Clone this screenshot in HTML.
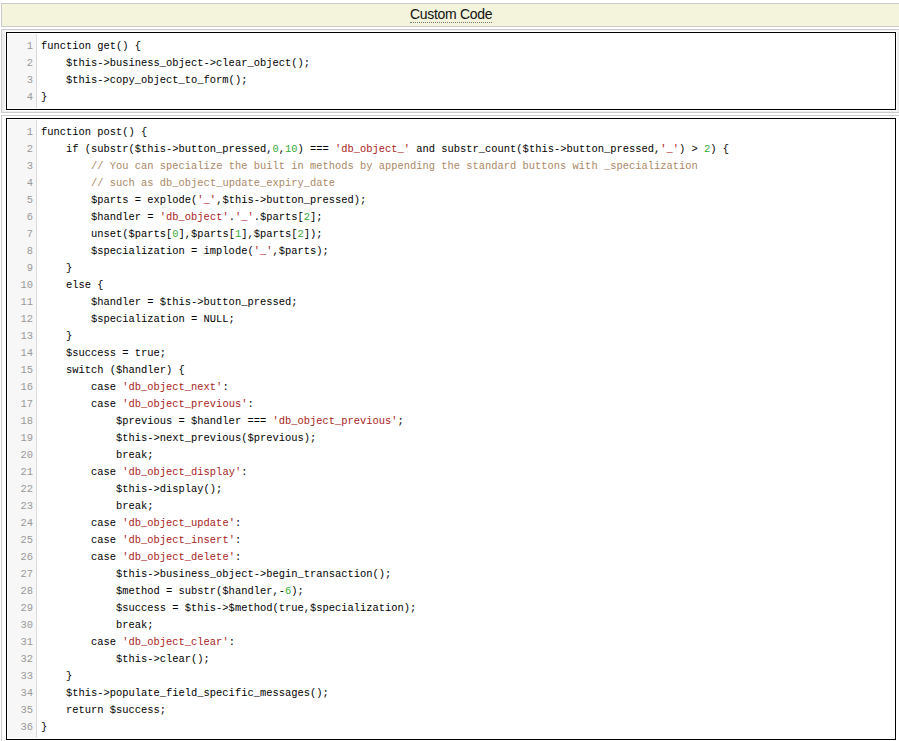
<!DOCTYPE html>
<html><head><meta charset="utf-8">
<style>
html,body{margin:0;padding:0;background:#fff;width:899px;height:741px;overflow:hidden;position:relative}
.hdr{position:absolute;left:1px;top:3px;width:920px;height:22px;border:1px solid #cbcbcb;background:#f4f4dc}
.ttl{position:absolute;left:410px;top:7px;font-family:"Liberation Sans",sans-serif;font-size:14px;letter-spacing:-0.3px;line-height:15px;color:#111;white-space:nowrap;border-bottom:1px dotted #777;padding-bottom:0}
.box{position:absolute;left:1px;width:920px;border:1px solid #cbcbcb;background:#fff}
.box1{top:29px;height:82px;background:#efefef}
.box2{top:115px;height:640px}
.ed{position:absolute;left:6px;width:888px;border:1px solid #000;background:#fff}
.ed1{top:32px;height:76px;box-shadow:0 0 0 1px #fff}
.ed2{top:118px;height:620px}
.gut{position:absolute;left:1px;top:1px;bottom:1px;width:28px;background:#f7f7f7;border-right:1px solid #dcdcdc}
.nums{position:absolute;left:0;width:26px;text-align:right;font-family:"Liberation Mono",monospace;font-size:10.43px;color:#999}
.code{position:absolute;left:34px;font-family:"Liberation Mono",monospace;font-size:10.43px;color:#000}
.l{height:17px;line-height:17px;white-space:pre}
.s{color:#a22}
.n{color:#3a3}
.c{color:#a86}
</style></head><body>
<div class="hdr"></div>
<div class="ttl">Custom Code</div>
<div class="box box1"></div>
<div class="ed ed1">
 <div class="gut"></div>
 <div class="nums" style="top:5px">
<div class="l">1</div>
<div class="l">2</div>
<div class="l">3</div>
<div class="l">4</div>
 </div>
 <div class="code" style="top:5px">
<div class="l">function get() {</div>
<div class="l">    $this-&gt;business_object-&gt;clear_object();</div>
<div class="l">    $this-&gt;copy_object_to_form();</div>
<div class="l">}</div>
 </div>
</div>
<div class="box box2"></div>
<div class="ed ed2">
 <div class="gut"></div>
 <div class="nums" style="top:5px">
<div class="l">1</div>
<div class="l">2</div>
<div class="l">3</div>
<div class="l">4</div>
<div class="l">5</div>
<div class="l">6</div>
<div class="l">7</div>
<div class="l">8</div>
<div class="l">9</div>
<div class="l">10</div>
<div class="l">11</div>
<div class="l">12</div>
<div class="l">13</div>
<div class="l">14</div>
<div class="l">15</div>
<div class="l">16</div>
<div class="l">17</div>
<div class="l">18</div>
<div class="l">19</div>
<div class="l">20</div>
<div class="l">21</div>
<div class="l">22</div>
<div class="l">23</div>
<div class="l">24</div>
<div class="l">25</div>
<div class="l">26</div>
<div class="l">27</div>
<div class="l">28</div>
<div class="l">29</div>
<div class="l">30</div>
<div class="l">31</div>
<div class="l">32</div>
<div class="l">33</div>
<div class="l">34</div>
<div class="l">35</div>
<div class="l">36</div>
 </div>
 <div class="code" style="top:5px">
<div class="l">function post() {</div>
<div class="l">    if (substr($this-&gt;button_pressed,<span class="n">0</span>,<span class="n">10</span>) === <span class="s">'db_object_'</span> and substr_count($this-&gt;button_pressed,<span class="s">'_'</span>) &gt; <span class="n">2</span>) {</div>
<div class="l">        <span class="c">// You can specialize the built in methods by appending the standard buttons with _specialization</span></div>
<div class="l">        <span class="c">// such as db_object_update_expiry_date</span></div>
<div class="l">        $parts = explode(<span class="s">'_'</span>,$this-&gt;button_pressed);</div>
<div class="l">        $handler = <span class="s">'db_object'</span>.<span class="s">'_'</span>.$parts[<span class="n">2</span>];</div>
<div class="l">        unset($parts[<span class="n">0</span>],$parts[<span class="n">1</span>],$parts[<span class="n">2</span>]);</div>
<div class="l">        $specialization = implode(<span class="s">'_'</span>,$parts);</div>
<div class="l">    }</div>
<div class="l">    else {</div>
<div class="l">        $handler = $this-&gt;button_pressed;</div>
<div class="l">        $specialization = NULL;</div>
<div class="l">    }</div>
<div class="l">    $success = true;</div>
<div class="l">    switch ($handler) {</div>
<div class="l">        case <span class="s">'db_object_next'</span>:</div>
<div class="l">        case <span class="s">'db_object_previous'</span>:</div>
<div class="l">            $previous = $handler === <span class="s">'db_object_previous'</span>;</div>
<div class="l">            $this-&gt;next_previous($previous);</div>
<div class="l">            break;</div>
<div class="l">        case <span class="s">'db_object_display'</span>:</div>
<div class="l">            $this-&gt;display();</div>
<div class="l">            break;</div>
<div class="l">        case <span class="s">'db_object_update'</span>:</div>
<div class="l">        case <span class="s">'db_object_insert'</span>:</div>
<div class="l">        case <span class="s">'db_object_delete'</span>:</div>
<div class="l">            $this-&gt;business_object-&gt;begin_transaction();</div>
<div class="l">            $method = substr($handler,-<span class="n">6</span>);</div>
<div class="l">            $success = $this-&gt;$method(true,$specialization);</div>
<div class="l">            break;</div>
<div class="l">        case <span class="s">'db_object_clear'</span>:</div>
<div class="l">            $this-&gt;clear();</div>
<div class="l">    }</div>
<div class="l">    $this-&gt;populate_field_specific_messages();</div>
<div class="l">    return $success;</div>
<div class="l">}</div>
 </div>
</div>
</body></html>
